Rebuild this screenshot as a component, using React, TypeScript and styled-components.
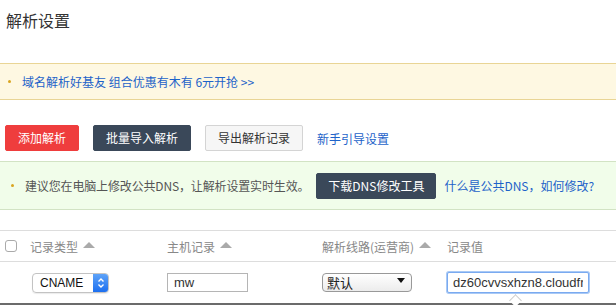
import * as React from 'react';
import styled, { createGlobalStyle } from 'styled-components';

const GlobalStyle = createGlobalStyle`
  html, body {
    margin: 0;
    padding: 0;
    background: #fff;
  }
  body {
    font-family: "Noto Sans CJK SC", "Noto Sans", "Liberation Sans", sans-serif;
    color: #333;
    overflow: hidden;
  }
`;

const Page = styled.div`
  width: 616px;
  height: 305px;
  overflow: hidden;
`;

const Title = styled.h1`
  margin: 0;
  padding: 9px 6px 0;
  height: 63px;
  box-sizing: border-box;
  font-size: 16px;
  font-weight: normal;
  line-height: 22px;
  color: #333;
`;

const Notice = styled.div<{ tone: 'yellow' | 'green' }>`
  display: flex;
  align-items: center;
  box-sizing: border-box;
  height: ${({ tone }) => (tone === 'yellow' ? '37px' : '49px')};
  padding-left: ${({ tone }) => (tone === 'yellow' ? '8px' : '11px')};
  background: ${({ tone }) => (tone === 'yellow' ? '#fef8e2' : '#f1fdea')};
  border-top: 1px solid ${({ tone }) => (tone === 'yellow' ? '#e9d595' : '#d2e3c4')};
  border-bottom: 1px solid ${({ tone }) => (tone === 'yellow' ? '#e9d595' : '#d2e3c4')};
  font-size: 12px;
  white-space: nowrap;
`;

const Dot = styled.span`
  width: 3px;
  height: 3px;
  border-radius: 50%;
  background: #d9a520;
  margin-right: 11px;
  flex: none;
`;

const BlueLink = styled.a`
  color: #1d63c9;
  text-decoration: none;
  font-size: 12px;
`;

const NoticeText = styled.span`
  color: #555;
  letter-spacing: -0.15px;
  margin-right: 7px;
`;

const Toolbar = styled.div`
  display: flex;
  align-items: center;
  gap: 14px;
  padding: 15px 5px 0;
  height: 61px;
  box-sizing: border-box;
`;

const Button = styled.button<{ kind: 'danger' | 'dark' | 'plain' }>`
  height: 26px;
  padding: 0 12px;
  border-radius: 2px;
  font-family: inherit;
  font-size: 12px;
  line-height: 24px;
  cursor: pointer;
  white-space: nowrap;
  border: 1px solid
    ${({ kind }) => (kind === 'danger' ? '#ef3d3d' : kind === 'dark' ? '#3a4859' : '#d4d4d4')};
  background: ${({ kind }) => (kind === 'danger' ? '#ef3d3d' : kind === 'dark' ? '#3a4859' : '#f6f6f6')};
  color: ${({ kind }) => (kind === 'plain' ? '#333' : '#fff')};
`;

const TableWrap = styled.div`
  margin-top: 20px;
  border-top: 1px solid #ddd;
  border-bottom: 2px solid #6b6b6b;
`;

const GridRow = styled.div<{ head?: boolean }>`
  display: grid;
  grid-template-columns: 25px 137px 155px 125px 1fr;
  align-items: center;
  padding-left: 5px;
  height: ${({ head }) => (head ? '30px' : '41px')};
  border-bottom: ${({ head }) => (head ? '1px solid #ddd' : 'none')};
  font-size: 12px;
  color: #888;
`;

const HeadCell = styled.div`
  display: flex;
  align-items: center;
  gap: 5px;
  white-space: nowrap;
`;

const SortUp = styled.span`
  width: 0;
  height: 0;
  border-left: 6px solid transparent;
  border-right: 6px solid transparent;
  border-bottom: 6px solid #aaa;
  margin-top: -2px;
`;

const CheckBox = styled.span`
  width: 10px;
  height: 10px;
  border: 1px solid #aaa;
  border-radius: 3px;
  background: #fff;
`;

const Cell = styled.div`
  position: relative;
  display: flex;
  align-items: center;
`;

const TypeSelect = styled.div`
  margin-left: 2px;
  display: flex;
  align-items: stretch;
  width: 75px;
  height: 18px;
  border: 1px solid #c3c3c3;
  border-radius: 4px;
  overflow: hidden;
  box-shadow: 0 1px 1px rgba(0, 0, 0, 0.08);
  font-family: "Liberation Sans", Arial, sans-serif;
  font-size: 12px;
  color: #111;
`;

const TypeValue = styled.span`
  flex: 1;
  padding-left: 7px;
  line-height: 18px;
`;

const Stepper = styled.span`
  width: 15px;
  background: linear-gradient(#5ea3f8, #1c6ff0);
  display: flex;
  align-items: center;
  justify-content: center;
`;

const TextBox = styled.input<{ focused?: boolean }>`
  box-sizing: border-box;
  height: ${({ focused }) => (focused ? '21px' : '19px')};
  width: ${({ focused }) => (focused ? '142px' : '81px')};
  padding: 0 ${({ focused }) => (focused ? '5px' : '6px')};
  border: 1px solid ${({ focused }) => (focused ? '#7aaaf0' : '#b5b5b5')};
  border-radius: ${({ focused }) => (focused ? '2px' : '0')};
  box-shadow: ${({ focused }) => (focused ? '0 0 0 1px #a9c9f5' : 'none')};
  font-family: "Liberation Sans", Arial, sans-serif;
  font-size: 13px;
  color: #333;
  outline: none;
  background: #fff;
`;

const LineSelect = styled.div`
  box-sizing: border-box;
  display: flex;
  align-items: center;
  justify-content: space-between;
  width: 90px;
  height: 19px;
  padding: 0 6px 0 4px;
  border: 1px solid #999;
  border-radius: 4px;
  background: linear-gradient(#ffffff, #ececec);
  font-size: 13px;
  color: #222;
`;

const DownCaret = styled.span`
  width: 0;
  height: 0;
  border-left: 4px solid transparent;
  border-right: 4px solid transparent;
  border-top: 5px solid #111;
  margin-top: -5px;
`;

const TipArrow = styled.span`
  position: absolute;
  left: 64px;
  bottom: -12px;
  width: 8px;
  height: 8px;
  background: #fff;
  border-left: 1px solid #ccc;
  border-top: 1px solid #ccc;
  transform: rotate(45deg);
`;

export default function App() {
  return (
    <Page>
      <GlobalStyle />
      <Title>解析设置</Title>

      <Notice tone="yellow">
        <Dot />
        <BlueLink href="#">域名解析好基友 组合优惠有木有 6元开抢 &gt;&gt;</BlueLink>
      </Notice>

      <Toolbar>
        <Button kind="danger">添加解析</Button>
        <Button kind="dark">批量导入解析</Button>
        <Button kind="plain">导出解析记录</Button>
        <BlueLink href="#">新手引导设置</BlueLink>
      </Toolbar>

      <Notice tone="green">
        <Dot />
        <NoticeText>建议您在电脑上修改公共DNS，让解析设置实时生效。</NoticeText>
        <Button kind="dark" style={{ padding: '0 11px' }}>下载DNS修改工具</Button>
        <BlueLink href="#" style={{ marginLeft: 8 }}>什么是公共DNS，如何修改?</BlueLink>
      </Notice>

      <TableWrap>
        <GridRow head>
          <HeadCell><CheckBox /></HeadCell>
          <HeadCell>记录类型<SortUp /></HeadCell>
          <HeadCell>主机记录<SortUp /></HeadCell>
          <HeadCell>解析线路(运营商)<SortUp /></HeadCell>
          <HeadCell>记录值</HeadCell>
        </GridRow>
        <GridRow>
          <Cell />
          <Cell>
            <TypeSelect>
              <TypeValue>CNAME</TypeValue>
              <Stepper>
                <svg width="8" height="12" viewBox="0 0 8 12" fill="none" stroke="#fff" strokeWidth="1.4">
                  <path d="M1.5 4.5 L4 2 L6.5 4.5" />
                  <path d="M1.5 7.5 L4 10 L6.5 7.5" />
                </svg>
              </Stepper>
            </TypeSelect>
          </Cell>
          <Cell>
            <TextBox readOnly value="mw" />
          </Cell>
          <Cell>
            <LineSelect>
              <span>默认</span>
              <DownCaret />
            </LineSelect>
          </Cell>
          <Cell>
            <TextBox focused readOnly value="dz60cvvsxhzn8.cloudfront.net" />
            <TipArrow />
          </Cell>
        </GridRow>
      </TableWrap>
    </Page>
  );
}
